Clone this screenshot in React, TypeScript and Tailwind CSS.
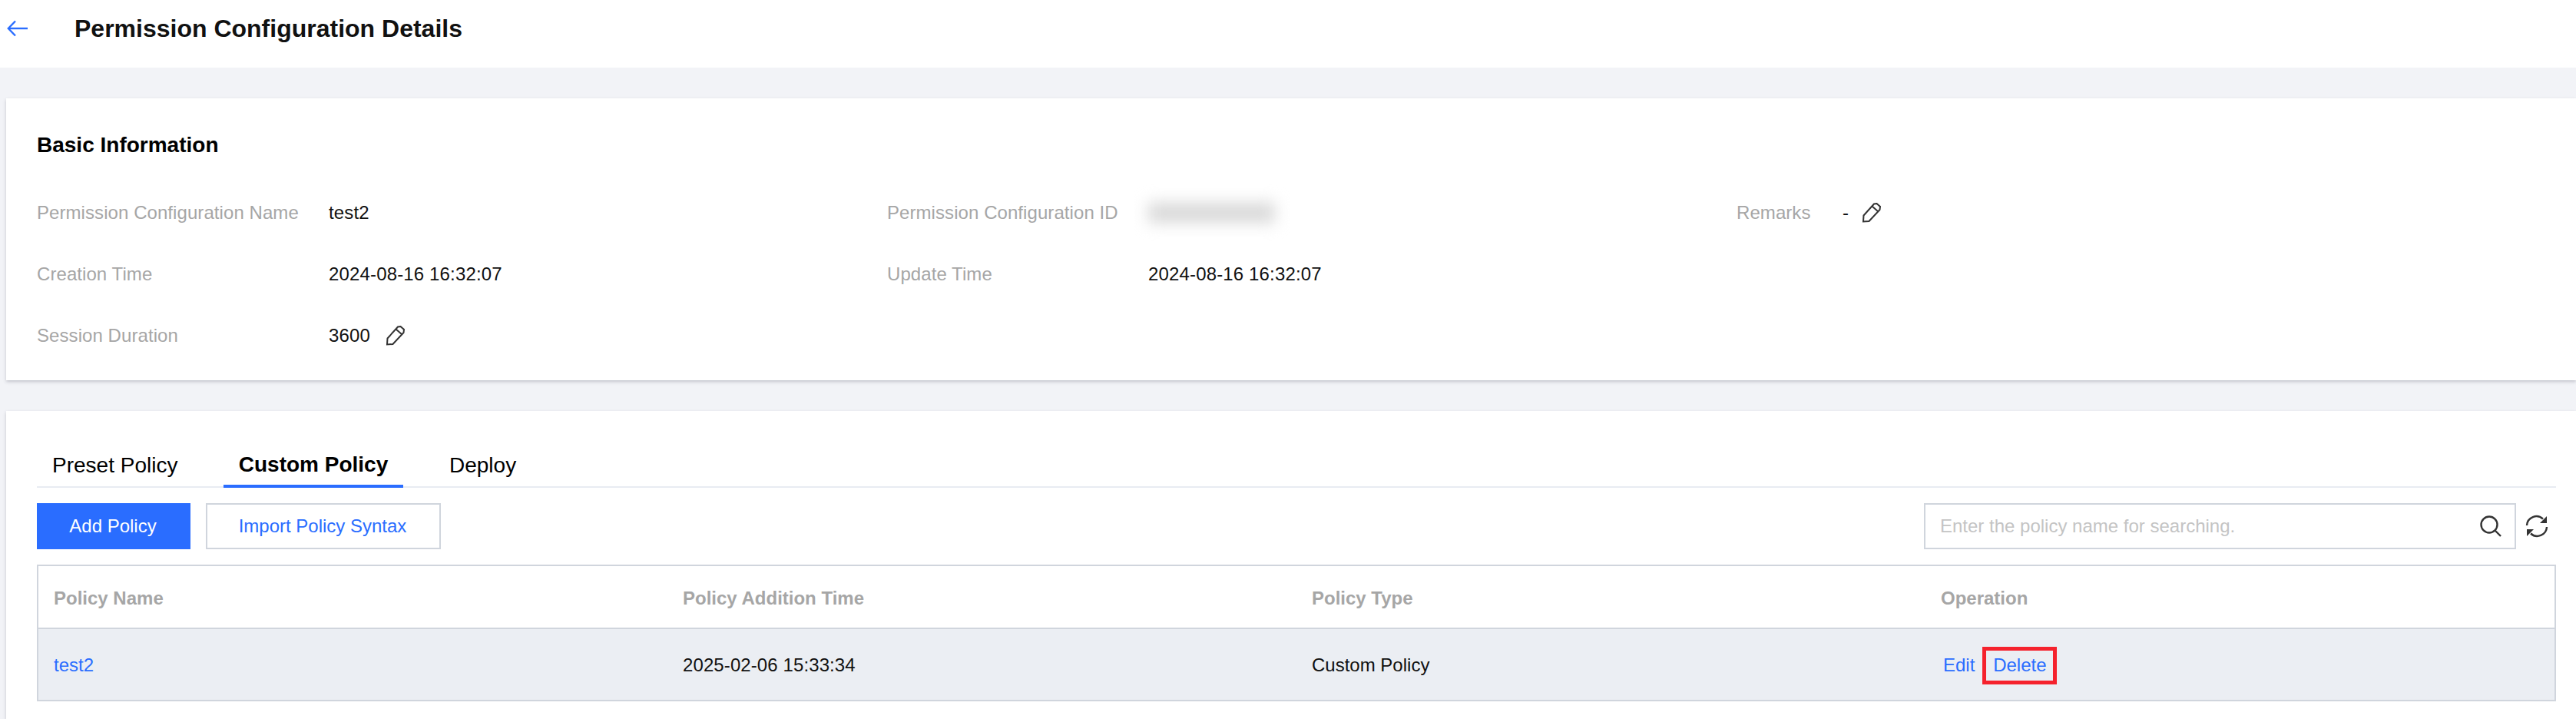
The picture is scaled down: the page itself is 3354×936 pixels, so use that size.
function PencilIcon() {
  return (
    <svg width="26" height="26" viewBox="0 0 26 26" fill="none" stroke="#333" strokeWidth="2" className="shrink-0">
      <path d="M2 24.5 L2.5 16.5 L16 1.5 L19.5 1 L24 5 L23.5 9 L9.5 24 Z" />
      <path d="M13.5 4.5 L21.5 11.5" />
    </svg>
  )
}

function InfoLabel({ children }: { children: React.ReactNode }) {
  return <div className="text-[24px] leading-[32px] tracking-[0.07px] text-[#a6a6a6]">{children}</div>
}

function InfoValue({ children }: { children: React.ReactNode }) {
  return <div className="flex items-center text-[24px] leading-[32px] tracking-[0.15px] text-[#111]">{children}</div>
}

function Header() {
  return (
    <div className="flex h-[88px] items-center bg-white pb-[14px]">
      <svg width="28" height="22" viewBox="0 0 28 22" fill="none" stroke="#2a6dff" strokeWidth="2.4" className="ml-[9px]">
        <path d="M27 11 H2" />
        <path d="M11 1.5 L1.8 11 L11 20.5" />
      </svg>
      <h1 className="ml-[60px] text-[32px] font-bold text-[#111]">Permission Configuration Details</h1>
    </div>
  )
}

function BasicInfo() {
  return (
    <section className="ml-2 h-[367px] bg-white pl-10 pt-[44px] shadow-[0_2px_4px_rgba(54,58,80,0.25)]">
      <h2 className="text-[28px] leading-[34px] font-bold text-black">Basic Information</h2>
      <div className="mt-[55px] grid grid-cols-[380px_727px_340px_766px_138px_1fr] gap-y-12">
        <InfoLabel>Permission Configuration Name</InfoLabel>
        <InfoValue>test2</InfoValue>
        <InfoLabel>Permission Configuration ID</InfoLabel>
        <InfoValue>
          <div className="h-[26px] w-[165px] bg-[#d8d8d8] blur-[10px]" />
        </InfoValue>
        <InfoLabel>Remarks</InfoLabel>
        <InfoValue>
          <span>-</span>
          <span className="ml-[17px]"><PencilIcon /></span>
        </InfoValue>

        <InfoLabel>Creation Time</InfoLabel>
        <InfoValue>2024-08-16 16:32:07</InfoValue>
        <InfoLabel>Update Time</InfoLabel>
        <InfoValue>2024-08-16 16:32:07</InfoValue>
        <div />
        <div />

        <InfoLabel>Session Duration</InfoLabel>
        <InfoValue>
          <span>3600</span>
          <span className="ml-[20px]"><PencilIcon /></span>
        </InfoValue>
      </div>
    </section>
  )
}

function Tabs() {
  return (
    <div className="flex h-[60px] items-stretch border-b-2 border-[#e8ecf2] text-[28px] text-black">
      <div className="flex w-[243px] items-center pl-[20px] pt-[3px]">Preset Policy</div>
      <div className="-mb-[2px] flex w-[234px] items-center justify-center border-b-4 border-[#2a6dff] pt-[3px] font-bold">
        Custom Policy
      </div>
      <div className="flex items-center pl-[60px] pt-[3px]">Deploy</div>
    </div>
  )
}

function Toolbar() {
  return (
    <div className="mt-5 flex items-stretch">
      <button className="h-[60px] w-[200px] bg-[#2a6dff] pr-[2px] text-[24px] text-white">Add Policy</button>
      <button className="ml-5 h-[60px] w-[306px] border-2 border-[#d0d5dd] bg-white pr-[2px] text-[24px] text-[#2a6dff]">
        Import Policy Syntax
      </button>
      <div className="ml-auto flex h-[60px] w-[771px] items-center justify-between border-2 border-[#d0d5dd] bg-white pl-[19px] pr-[16px]">
        <span className="text-[24px] text-[#c4c4c4]">Enter the policy name for searching.</span>
        <svg width="30" height="30" viewBox="0 0 30 30" fill="none" stroke="#333" strokeWidth="2.4">
          <circle cx="13" cy="13" r="10.5" />
          <path d="M20.5 20.5 L28 28" />
        </svg>
      </div>
      <button className="ml-[12px] mr-[10px] flex items-center">
        <svg width="30" height="30" viewBox="0 0 30 30" fill="none" stroke="#333" strokeWidth="2.4">
          <path d="M2 14 A12.5 12.5 0 0 1 23 5.5" />
          <path d="M28 16 A12.5 12.5 0 0 1 7 24.5" />
          <path d="M28 2 V11 H19 Z" fill="#333" stroke="none" />
          <path d="M2 28 V19 H11 Z" fill="#333" stroke="none" />
        </svg>
      </button>
    </div>
  )
}

function PolicyTable() {
  return (
    <div className="mt-5 h-[178px] border-2 border-[#d0d5dd]">
      <div className="grid h-[80px] grid-cols-4 items-center pt-[3px] text-[24px] font-bold text-[#a6a6a6]">
        <div className="pl-5">Policy Name</div>
        <div className="pl-5">Policy Addition Time</div>
        <div className="pl-5">Policy Type</div>
        <div className="pl-5">Operation</div>
      </div>
      <div className="grid h-[94px] grid-cols-4 items-center border-t-2 border-[#d0d5dd] bg-[#ebeef3] pt-[2px] text-[24px] text-[#111]">
        <div className="pl-5 text-[#2a6dff]">test2</div>
        <div className="pl-5 tracking-[0.1px]">2025-02-06 15:33:34</div>
        <div className="pl-5">Custom Policy</div>
        <div className="flex items-center pl-[23px] text-[#2a6dff]">
          <span>Edit</span>
          <span className="ml-[10px] flex h-[49px] w-[97px] items-center justify-center border-[5px] border-[#f5222d]">
            Delete
          </span>
        </div>
      </div>
    </div>
  )
}

export default function App() {
  return (
    <div className="min-h-[936px] bg-[#f2f3f7] font-['Liberation_Sans',Arial,sans-serif]">
      <Header />
      <div className="pt-10">
        <BasicInfo />
      </div>
      <section className="ml-2 mt-10 h-[401px] bg-white pl-10 pr-[26px] pt-[40px] shadow-[0_2px_4px_rgba(54,58,80,0.25)]">
        <Tabs />
        <Toolbar />
        <PolicyTable />
      </section>
    </div>
  )
}
